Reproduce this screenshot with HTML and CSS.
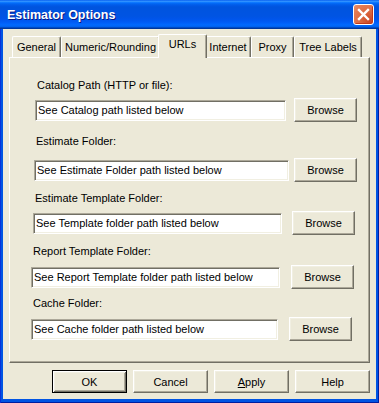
FILE: index.html
```html
<!DOCTYPE html>
<html lang="en">
<head>
  <meta charset="UTF-8" />
  <title>Estimator Options</title>
  <link rel="stylesheet" href="styles.css">
</head>
<body>

<div class="window">
  <div class="titlebar">
    <span class="title">Estimator Options</span>
    <button class="close-btn" aria-label="Close">
      <svg width="13" height="13" viewBox="0 0 13 13">
        <path d="M2 2 L11 11 M11 2 L2 11" stroke="#fff" stroke-width="2.4" stroke-linecap="square"/>
      </svg>
    </button>
  </div>

  <div class="client">
    <div class="tabs">
      <div class="tab tab-general">General</div>
      <div class="tab tab-numeric">Numeric/Rounding</div>
      <div class="tab tab-urls active">URLs</div>
      <div class="tab tab-internet">Internet</div>
      <div class="tab tab-proxy">Proxy</div>
      <div class="tab tab-tree">Tree Labels</div>
    </div>

    <div class="panel">
      <div class="field field-catalog">
        <div class="field-label">Catalog Path (HTTP or file):</div>
        <div class="field-line">
          <input type="text" class="path" value="See Catalog path listed below">
          <button class="btn browse">Browse</button>
        </div>
      </div>

      <div class="field field-estimate">
        <div class="field-label">Estimate Folder:</div>
        <div class="field-line">
          <input type="text" class="path" value="See Estimate Folder path listed below">
          <button class="btn browse">Browse</button>
        </div>
      </div>

      <div class="field field-template">
        <div class="field-label">Estimate Template Folder:</div>
        <div class="field-line">
          <input type="text" class="path" value="See Template folder path listed below">
          <button class="btn browse">Browse</button>
        </div>
      </div>

      <div class="field field-report">
        <div class="field-label">Report Template Folder:</div>
        <div class="field-line">
          <input type="text" class="path" value="See Report Template folder path listed below">
          <button class="btn browse">Browse</button>
        </div>
      </div>

      <div class="field field-cache">
        <div class="field-label">Cache Folder:</div>
        <div class="field-line">
          <input type="text" class="path" value="See Cache folder path listed below">
          <button class="btn browse">Browse</button>
        </div>
      </div>
    </div>

    <div class="actions">
      <button class="btn action default">OK</button>
      <button class="btn action">Cancel</button>
      <button class="btn action"><u>A</u>pply</button>
      <button class="btn action">Help</button>
    </div>
  </div>
</div>

</body>
</html>
```

FILE: styles.css
```css
* {
  box-sizing: border-box;
}

body, html {
  margin: 0;
  padding: 0;
  background: #ffffff;
}

.window {
  width: 379px;
  height: 403px;
  display: flex;
  flex-direction: column;
  background-color: #0054e3;
  box-shadow: inset 1px 0 #0831d9, inset -1px -1px #001ea0;
  font-family: "Liberation Sans", Arial, sans-serif;
  font-size: 11px;
  color: #000;
}

.titlebar {
  height: 29px;
  display: flex;
  align-items: center;
  justify-content: space-between;
  padding: 0 5px 0 7px;
  background: linear-gradient(to bottom, #0058ee 0%, #3593ff 4%, #288eff 6%, #127dff 8%, #036ffc 10%, #0262ee 14%, #0057e5 20%, #0054de 24%, #0054e3 56%, #0055eb 66%, #005bf5 76%, #026afe 86%, #0062ef 92%, #0052d6 94%, #0040ab 96%, #003092 100%);
}

.title {
  font-weight: bold;
  font-size: 12.5px;
  color: #fff;
  text-shadow: 1px 1px #0a1883;
  padding-top: 1px;
}

.close-btn {
  width: 21px;
  height: 21px;
  padding: 0;
  display: flex;
  align-items: center;
  justify-content: center;
  border: 1px solid #fff;
  border-radius: 3px;
  background: radial-gradient(circle at 85% 85%, #cc4623 0%, #dc6a41 45%, #e37a52 75%, #e8906e 100%);
  box-shadow: inset -1px -1px #c1391a;
}

.client {
  flex: 1;
  margin: 0 3px 4px 3px;
  padding: 5px 6px 0 6px;
  background-color: #ece9d8;
}

.tabs {
  display: flex;
  align-items: flex-end;
  height: 23px;
  padding-left: 3px;
}

.tab {
  height: 21px;
  padding-top: 1px;
  line-height: 19px;
  text-align: center;
  white-space: nowrap;
  border-top: 1px solid #fff;
  border-left: 1px solid #fff;
  border-right: 1px solid #716f64;
  border-radius: 2px 2px 0 0;
  box-shadow: inset -1px 0 #aca899;
  background-color: #ece9d8;
}

.tab-general  { width: 49px; }
.tab-numeric  { width: 99px; }
.tab-urls     { width: 45px; }
.tab-internet { width: 46px; }
.tab-proxy    { width: 43px; }
.tab-tree     { width: 68px; }

.tab.active {
  position: relative;
  z-index: 1;
  width: 49px;
  height: 24px;
  padding-top: 0;
  margin: 0 -2px -1px -2px;
}

.panel {
  height: 306px;
  padding-top: 20px;
  border-top: 1px solid #fff;
  border-left: 1px solid #fff;
  border-right: 1px solid #716f64;
  border-bottom: 1px solid #716f64;
  box-shadow: inset -1px -1px #aca899;
}

.field-label {
  line-height: 15px;
  padding-left: 2px;
  margin-bottom: 5px;
}

.field-line {
  display: flex;
  align-items: center;
}

.path {
  height: 21px;
  padding: 0 2px;
  font-family: inherit;
  font-size: 11px;
  color: #000;
  background: #fff;
  border: 1px solid;
  border-color: #aca899 #fff #fff #aca899;
  box-shadow: inset 1px 1px #716f64, inset -1px -1px #f1efe2;
  outline: none;
}

.btn {
  font-family: inherit;
  font-size: 11px;
  color: #000;
  padding: 0;
  background-color: #ece9d8;
  border: 1px solid;
  border-color: #fff #716f64 #716f64 #fff;
  box-shadow: inset -1px -1px #aca899, inset 1px 1px #f1efe2;
}

.browse {
  width: 63px;
  height: 24px;
}

.field-catalog  { margin-left: 25px; }
.field-catalog .path  { width: 251px; }
.field-catalog .browse { margin-left: 8px; }

.field-estimate { margin-left: 24px; margin-top: 12px; }
.field-estimate .field-label { margin-bottom: 9px; }
.field-estimate .path { width: 255px; }
.field-estimate .browse { margin-left: 5px; }

.field-template { margin-left: 23px; margin-top: 9px; }
.field-template .path { width: 249px; }
.field-template .browse { margin-left: 10px; }

.field-report   { margin-left: 21px; margin-top: 9px; }
.field-report .field-label { margin-bottom: 6px; }
.field-report .path { width: 249px; }
.field-report .browse { margin-left: 11px; }

.field-cache    { margin-left: 21px; margin-top: 7px; }
.field-cache .field-label { margin-bottom: 6px; }
.field-cache .path { width: 247px; }
.field-cache .browse { margin-left: 11px; }

.actions {
  display: flex;
  justify-content: flex-end;
  gap: 6px;
  margin-top: 7px;
}

.action {
  width: 75px;
  height: 23px;
}

.action.default {
  border: 1px solid #000;
  box-shadow: inset 1px 1px #fff, inset -1px -1px #716f64, inset 2px 2px #f1efe2, inset -2px -2px #aca899;
}
```
